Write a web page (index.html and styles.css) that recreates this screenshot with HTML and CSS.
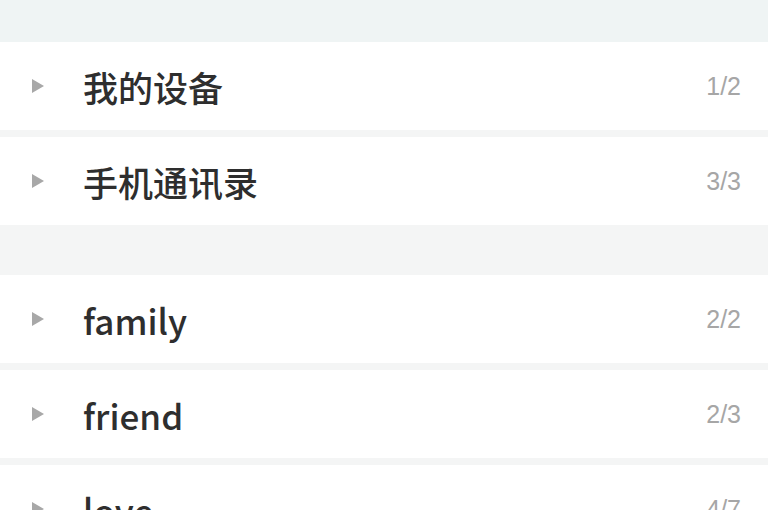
FILE: index.html
```html
<!DOCTYPE html>
<html lang="zh">
<head>
<meta charset="utf-8">
<link rel="stylesheet" href="styles.css">
</head>
<body>
<div class="topband"></div>
<div class="group">
  <div class="row"><span class="arrow"></span><span class="name">我的设备</span><span class="count">1/2</span></div>
  <div class="row"><span class="arrow"></span><span class="name">手机通讯录</span><span class="count">3/3</span></div>
</div>
<div class="group">
  <div class="row"><span class="arrow"></span><span class="name">family</span><span class="count">2/2</span></div>
  <div class="row"><span class="arrow"></span><span class="name">friend</span><span class="count">2/3</span></div>
  <div class="row"><span class="arrow"></span><span class="name">love</span><span class="count">4/7</span></div>
</div>
</body>
</html>
```
FILE: styles.css
```css
html, body {
  margin: 0;
  padding: 0;
}
body {
  background: #f4f5f5;
  font-family: "Noto Sans", "Noto Sans CJK SC", sans-serif;
  height: 510px;
  overflow: hidden;
}
.topband {
  height: 42px;
  background: #eff4f4;
}
.group {
  display: flex;
  flex-direction: column;
  gap: 7px;
  margin-bottom: 50px;
}
.row {
  height: 88px;
  background: #ffffff;
  display: flex;
  align-items: center;
  padding: 0 27px 0 32px;
}
.arrow {
  width: 0;
  height: 0;
  border-top: 7px solid transparent;
  border-bottom: 7px solid transparent;
  border-left: 12px solid #a8a8a8;
  margin-right: 39px;
}
.name {
  flex: 1;
  font-size: 35px;
  font-weight: 500;
  color: #2e2e2e;
  font-family: "Noto Sans CJK SC", "Noto Sans", sans-serif;
}
.count {
  font-size: 25px;
  color: #a6a6a6;
  font-family: "Liberation Sans", sans-serif;
}
```
